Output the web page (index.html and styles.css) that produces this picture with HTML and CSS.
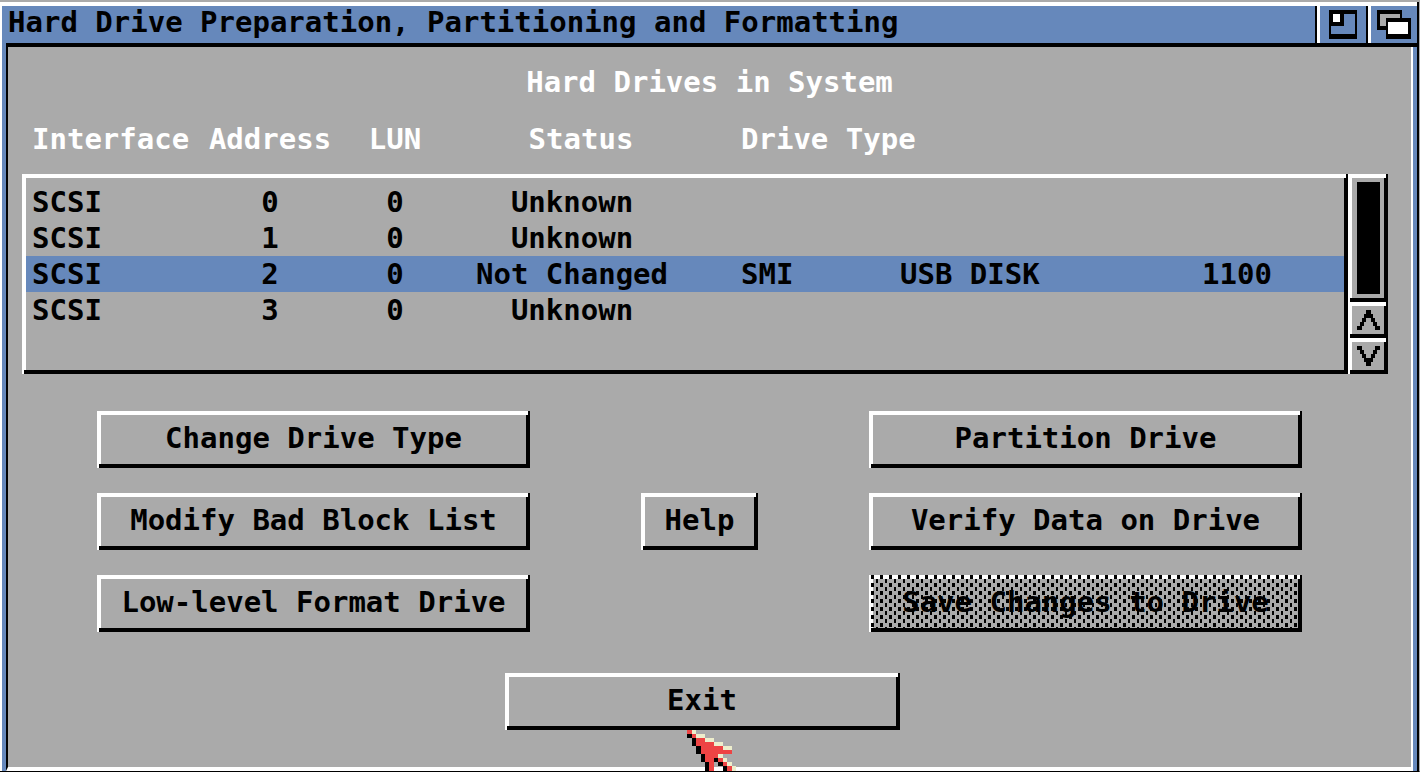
FILE: index.html
```html
<!DOCTYPE html>
<html lang="en">
<head>
    <meta charset="utf-8">
    <title>Hard Drive Preparation, Partitioning and Formatting</title>
    <link rel="stylesheet" href="styles.css">
</head>
<body>
    <div class="window">
        <div class="titlebar">
            <h1>Hard Drive Preparation, Partitioning and Formatting</h1>
            <button class="gadget" type="button" aria-label="Zoom window">
                <svg width="28" height="29" viewBox="0 0 28 29" shape-rendering="crispEdges">
                    <path fill="#000" d="M0 0h28v29H0z"/>
                    <path fill="#68b" d="M15 4h11v20H2v-8h13z"/>
                    <path fill="#fff" d="M4 4h7v8H4z"/>
                </svg>
            </button>
            <button class="gadget" type="button" aria-label="Window depth">
                <svg width="34" height="29" viewBox="0 0 34 29" shape-rendering="crispEdges">
                    <path fill="#000" d="M0 0h25v20H0z"/>
                    <path fill="#aaa" d="M3 4h20v12H3z"/>
                    <path fill="#000" d="M9 8h25v21H9z"/>
                    <path fill="#fff" d="M11 12h20v12H11z"/>
                </svg>
            </button>
        </div>

        <div class="content">
            <h2>Hard Drives in System</h2>

            <div class="drives">
                <table>
                    <thead>
                        <tr>
                            <th>Interface</th>
                            <th class="mid">Address</th>
                            <th class="mid">LUN</th>
                            <th class="status">Status</th>
                            <th class="type">Drive Type</th>
                        </tr>
                    </thead>
                    <tbody class="bevel">
                        <tr><td>SCSI</td><td class="mid">0</td><td class="mid">0</td><td class="status">Unknown</td><td></td><td></td><td></td></tr>
                        <tr><td>SCSI</td><td class="mid">1</td><td class="mid">0</td><td class="status">Unknown</td><td></td><td></td><td></td></tr>
                        <tr class="selected"><td>SCSI</td><td class="mid">2</td><td class="mid">0</td><td class="status">Not Changed</td><td>SMI</td><td>USB DISK</td><td>1100</td></tr>
                        <tr><td>SCSI</td><td class="mid">3</td><td class="mid">0</td><td class="status">Unknown</td><td></td><td></td><td></td></tr>
                    </tbody>
                </table>
                <div class="scroller">
                    <div class="track bevel"><div class="knob"></div></div>
                    <button class="arrow bevel" type="button" aria-label="Scroll up">
                        <svg width="23" height="20" viewBox="0 0 23 20" shape-rendering="crispEdges">
                            <path d="M9 0h5v4h2v4h2v4h2v4h3v4h-5v-4h-2v-4h-2V8H9v4H7v4H5v4H0v-4h3v-4h2V8h2V4h2z"/>
                        </svg>
                    </button>
                    <button class="arrow bevel" type="button" aria-label="Scroll down">
                        <svg width="23" height="20" viewBox="0 0 23 20" shape-rendering="crispEdges">
                            <path d="M9 20h5v-4h2v-4h2V8h2V4h3V0h-5v4h-2v4h-2v4H9V8H7V4H5V0H0v4h3v4h2v4h2v4h2z"/>
                        </svg>
                    </button>
                </div>
            </div>

            <div class="actions">
                <button class="btn bevel" type="button">Change Drive Type</button>
                <button class="btn bevel right" type="button">Partition Drive</button>
                <button class="btn bevel" type="button">Modify Bad Block List</button>
                <button class="btn bevel" type="button">Help</button>
                <button class="btn bevel" type="button">Verify Data on Drive</button>
                <button class="btn bevel" type="button">Low-level Format Drive</button>
                <button class="btn bevel right" type="button" disabled>Save Changes to Drive</button>
            </div>

            <div class="footer">
                <button class="btn bevel exit" type="button">Exit
                    <svg class="pointer" width="49" height="41" viewBox="0 0 49 41" shape-rendering="crispEdges">
                        <!-- shadow, body, highlight -->
                        <path fill="#000" d="M0 4h5v4H0zM5 8h4v8H5zM9 16h5v8H9zM14 24h4v8h-4zM18 32h4v9h-4zM27 28h4v4h-4zM31 32h5v4h-5zM36 36h4v5h-4z"/>
                        <path fill="#e44" d="M0 0h5v4H0zM5 4h4v4H5zM9 8h9v4H9zM9 12h18v4H9zM14 16h22v4H14zM14 20h31v4H14zM18 24h13v4H18zM18 28h9v4h-9zM22 32h5v9h-5zM31 28h5v4h-5zM36 32h4v4h-4zM40 36h5v5h-5z"/>
                        <path fill="#eec" d="M5 0h4v4H5zM9 4h9v4H9zM18 8h9v4h-9zM27 12h9v4h-9zM36 16h9v4h-9zM31 24h5v4h-5zM36 28h4v4h-4zM40 32h5v4h-5zM45 36h4v5h-4z"/>
                    </svg>
                </button>
            </div>
        </div>
    </div>
</body>
</html>
```
FILE: styles.css
```css
* {
    box-sizing: border-box;
    margin: 0;
    padding: 0;
}

body {
    background: #aaa;
    color: #000;
    font: bold 29px/36px "DejaVu Sans Mono", monospace;
}

button {
    color: inherit;
    font: inherit;
    border: 0;
}

svg {
    display: block;
}

/* window frame */
.window {
    display: flex;
    flex-direction: column;
    min-height: 100vh;
    padding: 4px 2px 0 2px;
    border-top: 2px solid #aaa;
    border-right: 1px solid #aaa;
    border-bottom: 1px solid #000;
    background: linear-gradient(#000, #000) right / 2px 100% no-repeat, #fff;
}

.titlebar {
    display: flex;
    height: 41px;
    margin-left: 4px;
    background: #68b;
    border-bottom: 4px solid #000;
    box-shadow: -4px 0 #68b;
}

.titlebar h1 {
    flex: 1;
    padding-left: 2px;
    font-size: inherit;
    line-height: 32px;
}

.gadget {
    display: flex;
    align-items: center;
    justify-content: center;
    width: 49px;
    background: #68b;
    border-left: 3px solid #fff;
    box-shadow: -2px 0 #000;
}

.gadget + .gadget {
    margin-left: 2px;
}

.content {
    flex: 1;
    padding: 17px 23px 32px 14px;
    background: #aaa;
    border-bottom: 4px solid #fff;
    border-right: 2px solid #fff;
    border-left: 2px solid #000;
    margin: 0 4px;
    box-shadow: -4px 0 #68b, 4px 0 #68b;
}

h2 {
    padding-left: 9px;
    font-size: inherit;
    color: #fff;
    text-align: center;
}

/* raised edge with stepped corners */
.bevel {
    background:
        linear-gradient(#fff, #fff) left / 2px 100%,
        linear-gradient(#000, #000) right / 2px 100%,
        linear-gradient(#fff, #fff) top / 100% 4px,
        linear-gradient(#000, #000) bottom / 100% 4px,
        linear-gradient(#fff, #fff) left / 4px 100%,
        linear-gradient(#000, #000) right / 4px 100%,
        #aaa;
    background-repeat: no-repeat;
}

/* drive list */
.drives {
    display: flex;
    align-items: flex-end;
    margin-top: 21px;
}

table {
    display: block;
    flex: 1;
}

thead,
tbody {
    display: block;
}

thead {
    padding: 0 4px 17px;
    color: #fff;
}

tbody {
    height: 200px;
    padding: 10px 4px;
}

tr {
    display: grid;
    grid-template-columns: 175fr 126fr 124fr 284fr 159fr 302fr 142fr;
    padding-left: 6px;
    white-space: nowrap;
}

th {
    text-align: left;
}

.mid,
.status {
    text-align: center;
}

.status {
    padding-right: 54px;
}

th.status {
    padding-right: 36px;
}

.type {
    grid-column: span 3;
}

.selected {
    background: #68b;
}

.scroller {
    display: flex;
    flex-direction: column;
    width: 40px;
    height: 200px;
}

.track {
    flex: 1;
    padding: 8px 8px 8px 9px;
}

.knob {
    height: 100%;
    background: #000;
}

.arrow {
    height: 36px;
    padding: 8px 8px 8px 9px;
}

/* buttons */
.actions {
    display: grid;
    grid-template-columns: 433fr 117fr 433fr;
    gap: 25px 111px;
    padding: 37px 86px 0 75px;
}

.btn {
    position: relative;
    height: 57px;
    padding-bottom: 3px;
    white-space: nowrap;
}

.right {
    grid-column: 3;
}

.btn:disabled::after {
    content: "";
    position: absolute;
    inset: 0 4px 4px 2px;
    background:
        conic-gradient(from 270deg at 3px 4px, #000 90deg, transparent 0) 0 0 / 9px 8px,
        conic-gradient(from 270deg at 2px 4px, #000 90deg, transparent 0) 5px 4px / 9px 8px;
}

.footer {
    padding: 41px 6px 0 0;
    text-align: center;
}

.exit {
    width: 395px;
}

.pointer {
    position: absolute;
    top: 100%;
    left: 182px;
}
```
